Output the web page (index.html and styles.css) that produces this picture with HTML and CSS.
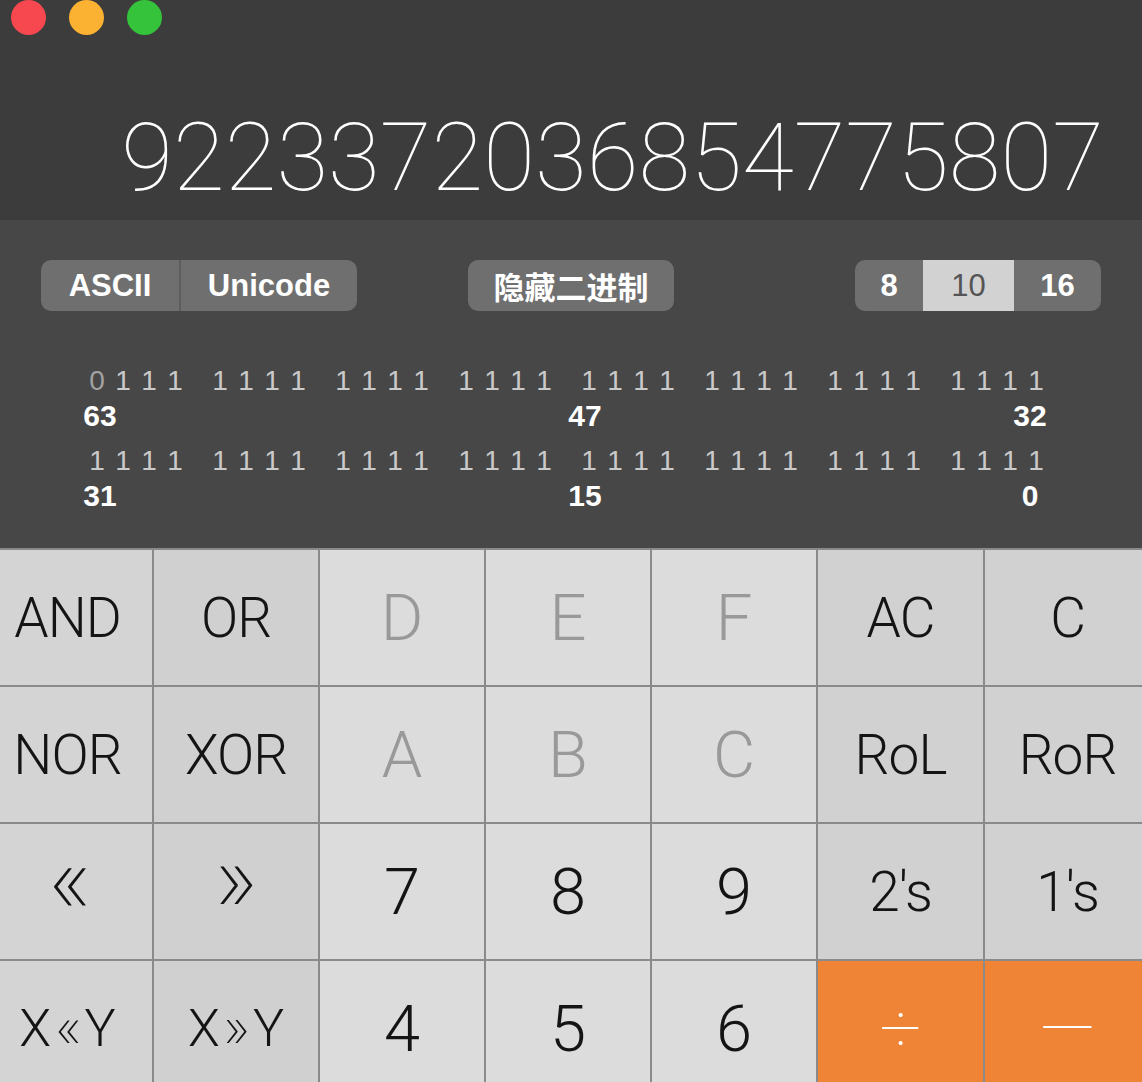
FILE: index.html
```html
<!DOCTYPE html>
<html lang="zh-CN">
<head>
<meta charset="utf-8">
<title>Programmer Calculator</title>
<link rel="stylesheet" href="styles.css">
</head>
<body>
<div class="window">
  <header class="display">
    <div class="lights">
      <span class="light red"></span>
      <span class="light yellow"></span>
      <span class="light green"></span>
    </div>
    <div class="value">9223372036854775807</div>
  </header>

  <section class="panel">
    <div class="controls">
      <div class="seg enc">
        <span class="seg-item w-ascii">ASCII</span>
        <span class="seg-item w-uni sep">Unicode</span>
      </div>
      <div class="pill">隐藏二进制</div>
      <div class="seg radix">
        <span class="seg-item w-r8">8</span>
        <span class="seg-item w-r10 active">10</span>
        <span class="seg-item w-r16">16</span>
      </div>
    </div>

    <div class="bits">
      <div class="bit-row">
        <div class="group"><span class="bit zero">0</span><span class="bit">1</span><span class="bit">1</span><span class="bit">1</span></div>
        <div class="group"><span class="bit">1</span><span class="bit">1</span><span class="bit">1</span><span class="bit">1</span></div>
        <div class="group"><span class="bit">1</span><span class="bit">1</span><span class="bit">1</span><span class="bit">1</span></div>
        <div class="group"><span class="bit">1</span><span class="bit">1</span><span class="bit">1</span><span class="bit">1</span></div>
        <div class="group"><span class="bit">1</span><span class="bit">1</span><span class="bit">1</span><span class="bit">1</span></div>
        <div class="group"><span class="bit">1</span><span class="bit">1</span><span class="bit">1</span><span class="bit">1</span></div>
        <div class="group"><span class="bit">1</span><span class="bit">1</span><span class="bit">1</span><span class="bit">1</span></div>
        <div class="group"><span class="bit">1</span><span class="bit">1</span><span class="bit">1</span><span class="bit">1</span></div>
      </div>
      <div class="label-row">
        <span class="lbl">63</span>
        <span class="lbl lbl-mid">47</span>
        <span class="lbl lbl-end">32</span>
      </div>
      <div class="bit-row second">
        <div class="group"><span class="bit">1</span><span class="bit">1</span><span class="bit">1</span><span class="bit">1</span></div>
        <div class="group"><span class="bit">1</span><span class="bit">1</span><span class="bit">1</span><span class="bit">1</span></div>
        <div class="group"><span class="bit">1</span><span class="bit">1</span><span class="bit">1</span><span class="bit">1</span></div>
        <div class="group"><span class="bit">1</span><span class="bit">1</span><span class="bit">1</span><span class="bit">1</span></div>
        <div class="group"><span class="bit">1</span><span class="bit">1</span><span class="bit">1</span><span class="bit">1</span></div>
        <div class="group"><span class="bit">1</span><span class="bit">1</span><span class="bit">1</span><span class="bit">1</span></div>
        <div class="group"><span class="bit">1</span><span class="bit">1</span><span class="bit">1</span><span class="bit">1</span></div>
        <div class="group"><span class="bit">1</span><span class="bit">1</span><span class="bit">1</span><span class="bit">1</span></div>
      </div>
      <div class="label-row">
        <span class="lbl">31</span>
        <span class="lbl lbl-mid">15</span>
        <span class="lbl lbl-end">0</span>
      </div>
    </div>
  </section>

  <section class="keypad">
    <div class="key op first">AND</div>
    <div class="key op alt">OR</div>
    <div class="key hex off">D</div>
    <div class="key hex off">E</div>
    <div class="key hex off">F</div>
    <div class="key fn">AC</div>
    <div class="key fn last">C</div>

    <div class="key op first">NOR</div>
    <div class="key op alt">XOR</div>
    <div class="key hex off">A</div>
    <div class="key hex off">B</div>
    <div class="key hex off">C</div>
    <div class="key fn">RoL</div>
    <div class="key fn last">RoR</div>

    <div class="key op first shift">«</div>
    <div class="key op alt shift">»</div>
    <div class="key hex num">7</div>
    <div class="key hex num">8</div>
    <div class="key hex num">9</div>
    <div class="key fn">2's</div>
    <div class="key fn last">1's</div>

    <div class="key op first xy"><span>X</span><span class="small">«</span><span>Y</span></div>
    <div class="key op alt xy"><span>X</span><span class="small">»</span><span>Y</span></div>
    <div class="key hex num">4</div>
    <div class="key hex num">5</div>
    <div class="key hex num">6</div>
    <div class="key orange">÷</div>
    <div class="key orange last">—</div>
  </section>
</div>
</body>
</html>
```

FILE: styles.css
```css
html, body {
  margin: 0;
  padding: 0;
}

body {
  width: 1142px;
  height: 1082px;
  overflow: hidden;
  background: #474747;
  font-family: "Liberation Sans", Arial, sans-serif;
}

.window {
  width: 1142px;
}

/* ---------- display ---------- */
.display {
  height: 220px;
  background: #3c3c3c;
  display: flex;
  flex-direction: column;
  justify-content: space-between;
}

.lights {
  display: flex;
  gap: 23px;
  padding-left: 11px;
}

.light {
  width: 35px;
  height: 35px;
  border-radius: 50%;
  display: block;
}

.red { background: #f7474f; }
.yellow { background: #fbb132; }
.green { background: #34c33b; }

.value {
  font-family: Roboto, "Liberation Sans", sans-serif;
  font-weight: 100;
  font-size: 94.5px;
  line-height: 94px;
  color: #ffffff;
  text-align: right;
  padding-right: 38px;
  padding-bottom: 15px;
}

/* ---------- panel ---------- */
.panel {
  height: 328px;
  background: #474747;
}

.controls {
  display: grid;
  grid-template-columns: 1fr auto 1fr;
  align-items: center;
  padding: 40px 41px 0;
}

.seg {
  display: flex;
  height: 51px;
  border-radius: 10px;
  overflow: hidden;
  background: #6f6f6f;
}

.enc { justify-self: start; }
.radix { justify-self: end; }

.seg-item {
  display: flex;
  align-items: center;
  justify-content: center;
  color: #ffffff;
  font-weight: bold;
  font-size: 31px;
}

.sep {
  border-left: 2px solid #5d5d5d;
}

.w-ascii { width: 138px; }
.w-uni { width: 176px; }
.w-r8 { width: 68px; }
.w-r10 { width: 91px; }
.w-r16 { width: 87px; }

.active {
  background: #d2d2d2;
  color: #555555;
  font-weight: normal;
}

.pill {
  width: 206px;
  height: 51px;
  border-radius: 10px;
  background: #6f6f6f;
  color: #ffffff;
  font-family: "Liberation Sans", "Noto Sans CJK SC", sans-serif;
  font-weight: bold;
  font-size: 31px;
  display: flex;
  align-items: center;
  justify-content: center;
}

/* ---------- bits ---------- */
.bits {
  margin-top: 52px;
  padding-left: 84px;
}

.bit-row {
  display: flex;
  gap: 19px;
  height: 35px;
}

.bit-row.second {
  margin-top: 10px;
}

.group {
  display: flex;
}

.bit {
  width: 26px;
  text-align: center;
  font-size: 28px;
  line-height: 35px;
  color: #cacaca;
}

.bit.zero {
  color: #a2a2a2;
}

.label-row {
  display: flex;
  height: 35px;
  margin-left: -14px;
}

.lbl {
  width: 60px;
  text-align: center;
  font-weight: bold;
  font-size: 30px;
  line-height: 35px;
  color: #ffffff;
}

.lbl-mid { margin-left: 425px; }
.lbl-end { margin-left: 385px; }

/* ---------- keypad ---------- */
.keypad {
  display: grid;
  grid-template-columns: 152px repeat(4, 164px) 165px 157px;
  grid-auto-rows: 135px;
  gap: 2px;
  background: #8a8a8a;
  border-top: 2px solid #8a8a8a;
}

.key {
  display: flex;
  align-items: center;
  justify-content: center;
  font-family: Roboto, "Liberation Sans", sans-serif;
  font-weight: 300;
  font-size: 55px;
  letter-spacing: -1px;
  color: #141414;
}

.key.first { padding-right: 17px; }
.key.last { padding-left: 8px; }

.op { background: #d4d4d4; }
.op.alt { background: #d0d0d0; }
.hex { background: #dcdcdc; font-size: 65px; letter-spacing: 0; }
.hex.off { color: #999999; }
.fn { background: #d1d1d1; }

.shift {
  font-size: 100px;
  font-weight: 100;
  letter-spacing: 0;
  padding-bottom: 28px;
}

.shift.first { padding-right: 14px; }

.xy {
  letter-spacing: 0;
  font-size: 52px;
  line-height: 1;
}

.small {
  font-size: 62px;
  font-weight: 100;
  margin: 0 3px;
  padding-bottom: 4px;
}

.orange {
  background: #f08436;
  color: #ffffff;
  font-size: 74px;
  font-weight: 100;
  letter-spacing: 0;
}
```
